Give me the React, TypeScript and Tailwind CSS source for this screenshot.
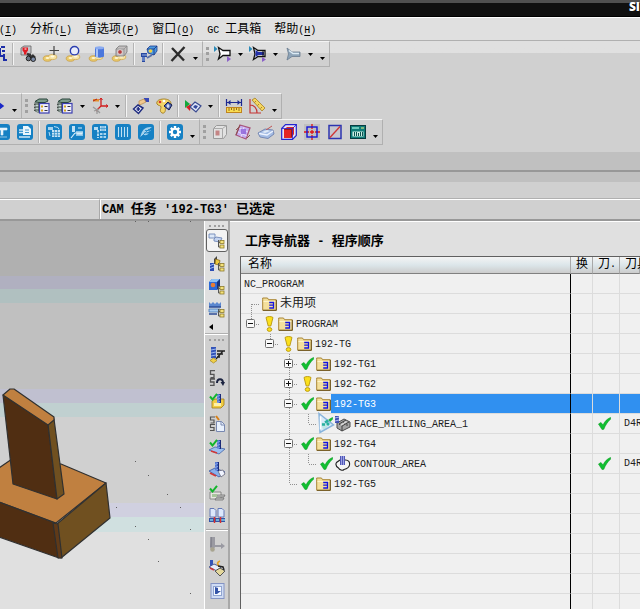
import type { ReactNode } from 'react';

const uiFont = "font-['Liberation_Mono','Noto_Sans_CJK_SC',monospace]";

/* ---------- text ---------- */

interface MixedTextProps {
  text: string;
  bold?: boolean;
}

// Latin runs are set one step smaller so that they take half a CJK cell each
function MixedText({ text, bold = false }: MixedTextProps) {
  const runs = text.split(/([\u4e00-\u9fff]+)/).filter(Boolean);
  return (
    <>
      {runs.map((run, i) => {
        const cjk = /[\u4e00-\u9fff]/.test(run);
        if (bold) {
          return (
            <span key={i} className={cjk ? 'text-[13px] font-bold' : 'text-[12px] font-bold'}>
              {run}
            </span>
          );
        }
        return (
          <span key={i} className={cjk ? 'text-[12px]' : 'text-[10px]'}>
            {run}
          </span>
        );
      })}
    </>
  );
}

/* ---------- icons ---------- */

const gold = (
  <g>
    <ellipse cx="4.5" cy="12.5" rx="4.3" ry="2.8" fill="#e9c96a" stroke="#c79a3c" strokeWidth=".7" />
    <ellipse cx="9.5" cy="11" rx="4.3" ry="2.6" fill="#f6e2a0" stroke="#cfa54a" strokeWidth=".7" />
    <ellipse cx="4.5" cy="12" rx="2" ry="1.1" fill="#fff6d0" />
    <ellipse cx="9.5" cy="10.6" rx="2" ry="1" fill="#fffae0" />
  </g>
);

const treeTag = (
  <g>
    <path d="M9.5 7v7h2M9.5 9.5h2" stroke="#555" fill="none" />
    <rect x="11" y="7.5" width="4" height="3" fill="#f5e27a" stroke="#8d7a2c" strokeWidth=".8" />
    <rect x="11" y="12" width="4" height="3" fill="#f5e27a" stroke="#8d7a2c" strokeWidth=".8" />
  </g>
);

const drill = (
  <g>
    <rect x="6" y="0" width="4" height="9" fill="#3454b8" />
    <path d="M7 0v9M6 2.5l4-1.5M6 5.5l4-1.5M6 8.5l4-1.5" stroke="#8fb0f0" strokeWidth=".8" />
    <path d="M9.5 0v9" stroke="#1b2a78" />
  </g>
);

const greenTick = <path d="M1 3.5l2.5 3L8 .8" fill="none" stroke="#12b52c" strokeWidth="2" />;

const layers = (
  <g>
    <path d="M1 3.500l4-2.500h8l1 2-3 1.500H4z" fill="#7c9c8c" stroke="#28433a" strokeWidth="1" />
    <path d="M1 4v9l3.500 1.500V5z" fill="#c6d8d0" stroke="#44564e" strokeWidth=".7" />
    <path d="M0 6.500l2-.5h3M0 9.500l2-.5h3M0 12.500l2-.5h3" stroke="#38423e" fill="none" />
    <rect x="5.5" y="5.5" width="9.500" height="9.500" fill="#f0f0fc" stroke="#3b3fb0" strokeWidth="1.200" />
    <path d="M7 8.500h2M7 12.500h2" stroke="#d4a81c" strokeWidth="2" />
    <path d="M10.500 8.500h3M10.500 12.500h3" stroke="#334" strokeWidth="1.200" />
  </g>
);

const tile = <rect x="0" y="0" width="16" height="16" rx="3" fill="#1681c4" />;

const icons: Record<string, ReactNode> = {
  edge: <path d="M9 2v8h4M11 5h3M13 8v6h3M10 1h4" stroke="#1c2da8" strokeWidth="2" fill="none" />,
  find: (
    <g>
      <path d="M1 2l3-2h7v7l-3 2H1z" fill="#c4c4c8" stroke="#666" strokeWidth=".8" />
      <path d="M2.500 1.500H8v3L6.500 6.500v2H4v-2L2.500 4.500z" fill="#e01c24" />
      <path d="M4.500 3h2" stroke="#fff" />
      <path d="M7 8l3 1 2 4M12 9l3 3" stroke="#333" strokeWidth="2.500" />
      <circle cx="8.500" cy="12.500" r="2.300" fill="#6a7484" stroke="#222" />
      <circle cx="13.200" cy="13.200" r="2.300" fill="#7c8ca8" stroke="#222" />
    </g>
  ),
  point: (
    <g>
      {gold}
      <path d="M11 0v9M6.500 4.500H16" stroke="#444" strokeWidth="1.200" />
    </g>
  ),
  circle: (
    <g>
      {gold}
      <circle cx="8.500" cy="4.700" r="4.200" fill="#e8ecfa" stroke="#2c3fb0" strokeWidth="1.400" />
    </g>
  ),
  cylinder: (
    <g>
      {gold}
      <path d="M6 1.500v9c2 1.500 7 1.500 9 0v-9z" fill="#4c78dc" />
      <path d="M7 2v9h2V2z" fill="#a8c4f8" />
      <ellipse cx="10.500" cy="1.700" rx="4.500" ry="1.500" fill="#8cacf0" />
    </g>
  ),
  hole: (
    <g>
      {gold}
      <path d="M4 3l3-3h8v6l-3 4H4z" fill="#c4c0c0" stroke="#777" strokeWidth=".8" />
      <path d="M4 3h8v7M12 3l3-3" fill="none" stroke="#888" strokeWidth=".7" />
      <ellipse cx="8" cy="6" rx="2.300" ry="2.300" fill="#b43c3c" stroke="#eee" strokeWidth=".7" />
    </g>
  ),
  machine: (
    <g>
      <path d="M0 7h6v4H4v5H1v-5H0z" fill="#2848a0" />
      <path d="M1 9h5M1 12h3M1 14h3" stroke="#98b4e8" />
      <path d="M6 3l3-3h7v5l-3 4-6-2z" fill="#4c9ae0" stroke="#1f3c90" strokeWidth=".8" />
      <path d="M6 3h7l3-3M13 3v6" stroke="#16307c" strokeWidth=".8" fill="none" />
      <circle cx="9.500" cy="5" r="1.800" fill="#f2d040" />
      <path d="M6 12l5-3" stroke="#5a70a8" strokeWidth="2" />
    </g>
  ),
  cross: <path d="M2 2l12 12.500M14.500 1L1.500 15" stroke="#2c2c2c" strokeWidth="2.400" />,
  funnelOpen: (
    <g>
      <path d="M-1 0l3.500 3L-1 6z" fill="#2c8ab8" />
      <path d="M3.500 1.500l4.500 3h7v5H8l-4.500 3.500L5 8z" fill="#fff" stroke="#111" strokeWidth="1.300" />
      <path d="M12 10l4 3-4 3z" fill="#8c62c8" />
    </g>
  ),
  funnelFull: (
    <g>
      <path d="M-1 0l3.500 3L-1 6z" fill="#2c8ab8" />
      <path d="M3.500 1.500l4.500 3h7v6H8l-4.500 3L5 8z" fill="#fff" stroke="#111" strokeWidth="1.300" />
      <path d="M5.500 4l3 2H14v3H8.500l-3 2z" fill="#2430a8" />
      <path d="M13 5v5" stroke="#111" />
      <path d="M12 11l4 2.500-4 2.500z" fill="#8c62c8" />
    </g>
  ),
  funnelGray: (
    <g>
      <path d="M2 2l5 4h8v4.500H7L2 14l1.500-6z" fill="#8ea4b8" stroke="#6a7c90" strokeWidth=".8" />
      <path d="M4 4.500l4 3h6" stroke="#dceaf4" strokeWidth="1.500" fill="none" />
    </g>
  ),
  arrowBlue: <path d="M4 8h8M10 5l4 3-4 3z" stroke="#1a28c8" strokeWidth="1.500" fill="#1a28c8" />,
  layers,
  axes: (
    <g>
      <path d="M9 0v8h7M9 8l-5 5" stroke="#d01c1c" strokeWidth="1.300" fill="none" />
      <path d="M7.500 2L9 0l1.500 2M14 6.500L16 8l-2 1.500" stroke="#d01c1c" fill="none" />
      <rect x="1" y="1" width="6" height="2.500" fill="#e4902c" />
      <path d="M1 3l4-2" stroke="#b02020" />
      <path d="M1 9l4 3 3 3M5 12v4M2 13l5-2" stroke="#999" strokeWidth="1.300" fill="none" />
    </g>
  ),
  handCube: (
    <g>
      <rect x="11" y="0" width="5" height="4" fill="#3848b8" />
      <path d="M6 3l5-2 2 3-4 2-3 1z" fill="#f0c890" stroke="#b88848" strokeWidth=".7" />
      <path d="M.5 11l4.500-4 5 3-4.500 5.500z" fill="#e8ecf8" stroke="#202c80" strokeWidth="1.500" />
      <path d="M3.500 11h3.500M5.200 9v4" stroke="#202c80" strokeWidth="1.500" />
    </g>
  ),
  palette: (
    <g>
      <path d="M8 1C3 1 0 3 1 6c1 2 4 1 4 3s-2 4 1 6c3 1 4-3 3-5 4 0 6-1 6-4 0-4-4-5-7-5z" fill="#f2d468" stroke="#a8842c" />
      <circle cx="4" cy="4" r="1.300" fill="#d83030" />
      <circle cx="8" cy="3" r="1.300" fill="#fff" />
      <path d="M8 8l4-4 4 3-3 5z" fill="#5068b0" stroke="#141c50" />
      <path d="M10.500 8h3M12 6v4" stroke="#fff" />
    </g>
  ),
  greenRed: (
    <g>
      <path d="M0 2l5 4-5 4z" fill="#14a83c" />
      <path d="M1 9l5-3-1 7z" fill="#d82020" />
      <path d="M5 9l5-5 6 4-5 6z" fill="#dfe6f8" stroke="#3c4c90" strokeWidth="1.200" />
      <path d="M8 9l2-2 3 1-2 3z" fill="#34489c" />
    </g>
  ),
  ruler: (
    <g>
      <path d="M.5 1v7M15.500 1v7M1 4.500h14" stroke="#1c2890" strokeWidth="1.200" />
      <path d="M4.500 2L1.500 4.500l3 2.500zM11.500 2l3 2.500-3 2.500z" fill="#1c2890" />
      <rect x=".5" y="9.500" width="15" height="5" fill="#f8dc50" stroke="#c08420" />
      <path d="M3 10v3M5.500 10v2M8 10v3M10.500 10v2M13 10v3" stroke="#7c4c18" strokeWidth=".8" />
    </g>
  ),
  angle: (
    <g>
      <path d="M1 1v14h11M1 7c4 0 7 3 7 8" stroke="#c43434" fill="none" strokeWidth="1.200" />
      <path d="M3 2l3-2 10 10-3 3z" fill="#f4d660" stroke="#a88024" strokeWidth=".8" />
      <path d="M7 3l-1.500 1.500M10 6L8.500 7.500M13 9l-1.500 1.500" stroke="#886418" strokeWidth=".7" />
    </g>
  ),
  tileText: (
    <g>
      {tile}
      <path d="M2 4h11v2H9v5H7V6H2zM2 13h11" fill="#e6f4fc" stroke="#e6f4fc" strokeWidth=".6" />
    </g>
  ),
  tilePage: (
    <g>
      {tile}
      <path d="M6 2h5l3 3v6H6z" fill="#eaf6fc" />
      <path d="M2 6h4M2 8.500h4M2 13h11" stroke="#cfe8f6" strokeWidth="1.300" />
      <path d="M8 6h4M8 8.500h4" stroke="#1681c4" strokeWidth=".8" />
    </g>
  ),
  tileGrid: (
    <g>
      {tile}
      <path d="M2 3h5v3H2z" fill="#a8d4ee" />
      <path d="M6 6h8v7H6z" fill="#c4e2f4" />
      <path d="M6 8.500h8M6 11h8M8.500 6v7M11.500 6v7" stroke="#3a94cc" strokeWidth=".8" />
      <path d="M8 2.500l4 1 1 2M3 8l1 4" stroke="#b8dcf2" fill="none" />
    </g>
  ),
  tileAxis: (
    <g>
      {tile}
      <path d="M3 2h3v6H3z" fill="#c4e2f4" />
      <path d="M7 7h7v5H7z" fill="#8cc4e6" />
      <path d="M6 9l-4 5M6 9h8M9 4h4M8 10h5" stroke="#d8eefa" strokeWidth="1.200" />
    </g>
  ),
  tileTree: (
    <g>
      {tile}
      <path d="M2 3h4v3H2zM8 2h6v5H8z" fill="#b8dcf2" />
      <path d="M10 2v5M12 2v5M8 4.500h6" stroke="#3a94cc" strokeWidth=".7" />
      <path d="M6 6v8M8 10h6M8 13h6" stroke="#d8eefa" strokeWidth="1.600" strokeDasharray="2.500 1" />
    </g>
  ),
  tileBars: (
    <g>
      {tile}
      <path d="M3.500 3v10M6.500 3v10M9.500 3v10M12.500 3v10" stroke="#bfe0f4" strokeWidth="1.100" />
    </g>
  ),
  tileFan: (
    <g>
      {tile}
      <path d="M2 13c1-2 1-3 2-5 2-4 5-5 10-5-2 1-2 2-4 3h3c-2 2-4 2-5 3h3c-2 3-4 2-6 2z" fill="#a4d2ee" />
      <path d="M3 13l8-8M6 9h5M7 6.500h5" stroke="#1681c4" strokeWidth=".8" />
    </g>
  ),
  tileGear: (
    <g>
      {tile}
      <path d="M8 2v12M2 8h12M3.800 3.800l8.400 8.400M12.200 3.800l-8.400 8.400" stroke="#fff" strokeWidth="2.400" />
      <circle cx="8" cy="8" r="4.300" fill="#fff" />
      <circle cx="8" cy="8" r="2.200" fill="#1681c4" />
    </g>
  ),
  boxFace: (
    <g>
      <path d="M1.500 4.500l3-3h10v9l-3 4h-10z" fill="#e2e2e2" stroke="#999" />
      <path d="M1.500 4.500h9v10M10.500 4.500l4-3" fill="none" stroke="#aaa" />
      <rect x="3.500" y="6.500" width="4" height="5" fill="#c48484" />
    </g>
  ),
  meshPurple: (
    <g>
      <path d="M5 1l10 3-4 11L1 11z" fill="#c4aef0" stroke="#a8547c" strokeWidth="1.300" />
      <path d="M4 4l9 4M3 8l9 4M9 3L6 13" stroke="#efe6ff" strokeWidth=".8" />
      <path d="M5 1L1 11M1 6l3-3M12 14l3-3" stroke="#8c5050" />
      <rect x="6" y="5" width="5" height="5" fill="#8c62d8" opacity=".8" />
    </g>
  ),
  slabs: (
    <g>
      <path d="M0 9l7-4 8 1 1 4-6 4.500-8-1.500z" fill="#a4bce4" stroke="#6478a8" strokeWidth=".8" />
      <path d="M1 9.500l8 1.500 6-4" fill="none" stroke="#eef4ff" strokeWidth="1.300" />
      <path d="M8 6l6-4" stroke="#c05454" />
      <path d="M4 8l5-2 3 1-5 2z" fill="#dfeaf8" />
    </g>
  ),
  redCube: (
    <g>
      <path d="M.7 4.500L4.500.7h10.800v10.800l-3.800 3.800H.7z" fill="#e8e4f4" stroke="#2424d0" strokeWidth="1.200" />
      <path d="M3 5.500l3-2.500h7v7l-2.500 4H3z" fill="#e42424" />
      <path d="M3 5.500h7.500v8M10.500 5.500L13 3" stroke="#901010" strokeWidth=".8" fill="none" />
      <path d="M.7 4.500h10.800v10.800M11.500 4.500L15.300.7" fill="none" stroke="#2424d0" strokeWidth=".8" />
    </g>
  ),
  target: (
    <g>
      <rect width="16" height="16" fill="#c0c0c0" />
      <path d="M8 0v5M8 6v4M8 11v5M0 8h5M6 8h4M11 8h5" stroke="#e01414" strokeWidth="1.300" />
      <rect x="3" y="3" width="10" height="10" fill="none" stroke="#1414d8" strokeWidth="1.400" />
    </g>
  ),
  slash: (
    <g>
      <rect x="2" y="1.500" width="12" height="13" fill="#c6c6ce" stroke="#2c34b0" strokeWidth="1.500" />
      <path d="M3 13.500L13 2.500" stroke="#d03434" strokeWidth="1.300" />
    </g>
  ),
  panel: (
    <g>
      <rect x=".5" y="1.500" width="15" height="13" fill="#0f7c78" stroke="#083c40" />
      <path d="M2 4h7" stroke="#8ee0d0" strokeWidth="1.500" />
      <path d="M2.500 7.500h11v5h-11z" fill="#cfeee4" />
      <path d="M4.500 8v4M6.500 8v4M8.500 9v3M10.500 8v4M12.500 8v4" stroke="#0c5450" />
      <path d="M11 4h3" stroke="#f0f080" />
    </g>
  ),
  viewOrder: (
    <g>
      <path d="M0 1h6v4H0z" fill="#dce8f8" stroke="#7088b8" strokeWidth=".9" />
      <path d="M5 6l2-2 6 1-2 4-6-1z" fill="#c4d4f0" stroke="#7088b8" strokeWidth=".9" />
      {treeTag}
    </g>
  ),
  viewTool: (
    <g>
      <path d="M1 7h4v8H1z" fill="#2c4cb4" />
      <path d="M1 9.500l4-1.500M1 12.500l4-1.500" stroke="#9cbcf4" />
      <path d="M5 3l3-3v8H5z" fill="#444" />
      <path d="M6.500 3l4.500 1.500-1 4.500-4-1z" fill="#ecc83c" stroke="#86681c" strokeWidth=".8" />
      {treeTag}
    </g>
  ),
  viewGeom: (
    <g>
      <path d="M0 3l3-3h8v7l-3 4H0z" fill="#2c68d8" />
      <path d="M0 3l3-3h8L8 3z" fill="#8cc0f4" />
      <circle cx="4" cy="6" r="2.300" fill="#e87c34" />
      <path d="M8 3l3-3v7l-3 4z" fill="#1a347c" />
      {treeTag}
    </g>
  ),
  viewMethod: (
    <g>
      <path d="M0 0v5h12V0l-2 2-2-2-2 2-2-2-2 2z" fill="#5c88d0" />
      <path d="M0 5h12M0 12h8" stroke="#2c4c98" strokeWidth="1.300" />
      <path d="M0 7h11v3H0z" fill="#a8ccf0" stroke="#4878b8" strokeWidth=".8" />
      {treeTag}
    </g>
  ),
  createTool: (
    <g>
      <rect x="2" y="0" width="5" height="11" fill="#3454b8" />
      <path d="M2 3l5-1M2 6l5-1M2 9l5-1" stroke="#9cb8f0" />
      <path d="M8 4h8M8 7h6M8 10h3M7 12l7-8" stroke="#222" strokeWidth="1.300" />
      <path d="M1 13.500l3.500-2.500 3.500 2.500-3.500 2.500z" fill="#f0d048" stroke="#a4841c" strokeWidth=".7" />
    </g>
  ),
  path: (
    <g>
      <path d="M6 .7H1.500v3.600H5v3.400H1.500M6 9H1.500v3H5v3.300H1" fill="none" stroke="#555" strokeWidth="1.300" />
      <path d="M8 13c0-5 6-5 6 0" fill="none" stroke="#1c2440" strokeWidth="2" />
      <path d="M11.500 12h4.500l-2 4z" fill="#1c2440" />
    </g>
  ),
  verifyBox: (
    <g>
      <path d="M3 8l3-2h9v6l-3 3H3z" fill="#f0cc44" stroke="#a07c1c" strokeWidth=".8" />
      <path d="M5 10h7v3H5z" fill="#fdf0a8" />
      <g transform="translate(2 1)">{drill}</g>
      {greenTick}
    </g>
  ),
  pathDoc: (
    <g>
      <path d="M6 1H1.500v3H5v3H1.500M6 8.500H1.500v3H5v3H1" fill="none" stroke="#555" strokeWidth="1.200" />
      <path d="M7 0l3 4" stroke="#d88018" strokeWidth="2" />
      <path d="M7.500 5.500h5l3 3v7h-8z" fill="#e8f0fc" stroke="#7888b0" />
      <path d="M12 5.500V9h3.500" fill="none" stroke="#7888b0" />
    </g>
  ),
  verifyPlane: (
    <g>
      <path d="M0 11l6-3 10 2-6 5z" fill="#9cc0f0" stroke="#4464a8" strokeWidth=".8" />
      <path d="M2 12l6 2" stroke="#d03838" strokeWidth="1.800" />
      <g transform="translate(2 1)">{drill}</g>
      {greenTick}
    </g>
  ),
  simulate: (
    <g>
      <path d="M0 9l6-3 10 4-6 5z" fill="#88b0ec" stroke="#3c58a0" strokeWidth=".8" />
      <path d="M1 11l6 3" stroke="#d03838" strokeWidth="1.800" />
      <path d="M9 9l5-1 2 4-4 3z" fill="#f0f4ff" stroke="#667" strokeWidth=".8" />
      {drill}
    </g>
  ),
  postTick: (
    <g>
      <path d="M1 7h11v7H1z" fill="#e6e6e0" stroke="#808080" strokeWidth=".9" />
      <path d="M8 10h8l-1 2H7zM7 13h8l-1 2H6z" fill="#c4c4c4" stroke="#666" strokeWidth=".7" />
      <path d="M3 9h5v3H3z" fill="#a8c49c" />
      {greenTick}
    </g>
  ),
  docs: (
    <g>
      <path d="M1 .5h4l2 2V9H1zM9 .5h4l2 2V9H9z" fill="#dce8fc" stroke="#6478b4" />
      <rect x="0" y="10" width="16" height="4" fill="#3454a8" />
      <path d="M1 12h3M7 12h3M12 12h4" stroke="#80d0e8" strokeWidth="1.500" />
      <path d="M5.500 9v6M11.500 9v6" stroke="#d83030" strokeWidth="1.500" />
    </g>
  ),
  toolGray: (
    <g>
      <path d="M2 0h4v8h6V6l4 3-4 3v-2H6l-2 4-3-3z" fill="#9a9aa2" />
      <path d="M2 0v10" stroke="#777784" strokeWidth="1.200" />
      <circle cx="3.500" cy="12.500" r="2.300" fill="#a8a490" />
    </g>
  ),
  toolCopy: (
    <g>
      <rect x="1" y="0" width="3" height="6" fill="#3454b8" />
      <path d="M0 7l5-3 7 3-4 4z" fill="#e8ecf8" stroke="#4c5c94" />
      <path d="M1 8l4 2" stroke="#d03838" strokeWidth="1.500" />
      <path d="M11 1c-3 1-3 3-1 5" stroke="#e8a428" strokeWidth="1.800" fill="none" />
      <path d="M6 11l5-3 5 3-5 5z" fill="#e4d89c" stroke="#555" />
      <path d="M9 6l5 1 1 3" stroke="#222" strokeWidth="1.500" fill="none" />
    </g>
  ),
  toolDoc: (
    <g>
      <rect x="2" y=".5" width="13" height="15" fill="#cfdcf4" stroke="#8494c4" />
      <rect x="4.500" y="3.500" width="8" height="9" fill="#f4f8ff" stroke="#90a4d0" />
      <path d="M6 4v7h2l4-3-3 0V5z" fill="#3454a8" />
    </g>
  ),
  drillOnly: <g transform="translate(-5 3)">{drill}</g>,
};

function Glyph({ name }: { name: string }) {
  return (
    <svg viewBox="0 0 16 16" className="h-4 w-4 shrink-0 overflow-visible" aria-hidden="true">
      {icons[name]}
    </svg>
  );
}

function TickIcon() {
  return (
    <svg viewBox="0 0 13 13" className="h-[13px] w-[13px] shrink-0" aria-hidden="true">
      <path d="M.5 7L3 5.500l2 2.500c2-4 4-6 7.500-7.500l.2 1.500C9.500 5 7.500 8 5.800 12.300L4 12.500z" fill="#10c030" stroke="#0a9c24" strokeWidth=".6" />
    </svg>
  );
}

function WarnIcon() {
  return (
    <svg viewBox="0 0 9 16" className="h-4 w-[9px] shrink-0" aria-hidden="true">
      <path d="M1 1.500C2.500.2 6.500.2 8 1.500L5.800 10H3.200z" fill="#fbe01c" stroke="#b8960c" strokeWidth=".9" />
      <ellipse cx="4.500" cy="13.500" rx="2.300" ry="1.900" fill="#fbe01c" stroke="#b8960c" strokeWidth=".9" />
    </svg>
  );
}

function FolderIcon() {
  return (
    <svg viewBox="0 0 15 14" className="h-[14px] w-[15px] shrink-0" aria-hidden="true">
      <path d="M.7 2.200V1h4.800l1 1.700h7.800v10.600H.7z" fill="#f4e09c" stroke="#a88434" />
      <path d="M1.500 4.500h12" stroke="#fdf4c8" />
      <path d="M14.300 3v10.300H1" stroke="#6c5420" fill="none" />
      <path d="M7.200 5.500h4.300v5.500H7.200M7.200 8.200h4.300" fill="none" stroke="#1414e0" strokeWidth="1.300" />
    </svg>
  );
}

function FaceMillIcon() {
  return (
    <svg viewBox="0 0 16 16" className="h-4 w-4 shrink-0" aria-hidden="true">
      <path d="M2 7l7-4 6 3v5l-8 4-5-3z" fill="#a4a4a4" stroke="#4c4c4c" />
      <path d="M4 8l7-4M7 10l7-4M7 10v5M4 8l3 2M10 8l-2-2M12 10v-2" stroke="#404040" />
      <path d="M5 9l6-4 1 1-6 4z" fill="#dcdcdc" />
      <path d="M0 0h4v7H0z" fill="#4050b4" />
      <path d="M0 2l4-1M0 5l4-1" stroke="#b0bcf0" />
    </svg>
  );
}

function ContourIcon() {
  return (
    <svg viewBox="0 0 16 16" className="h-4 w-4 shrink-0" aria-hidden="true">
      <path d="M5 4L1.500 6.500C0 9 2 11 3.500 12c1 2 4 3 5.500 1.500C11 13 14 12 14.500 9c.5-3-1-5-4-5z" fill="#f4f4f4" stroke="#222" strokeWidth="1.100" />
      <rect x="5" y="0" width="5" height="9" fill="#5058b8" />
      <path d="M6.500 0v9M8.500 0v9" stroke="#b0b4ec" strokeWidth=".8" />
    </svg>
  );
}

function Pointer() {
  return (
    <svg viewBox="0 0 18 22" className="pointer-events-none absolute -top-[2px] left-[76px] h-[22px] w-[18px]" aria-hidden="true">
      <path d="M2 1.500L16.500 13 3 20.500z" fill="#d4eafa" fillOpacity=".9" stroke="#88b4dc" strokeWidth="1.500" />
      <path d="M3.500 4.500v13" stroke="#fff" strokeWidth="1.500" />
      <path d="M5 12.500h3M10 11l2 2M8 10.500l3-2" stroke="#28b0a0" strokeWidth="2.600" fill="none" />
    </svg>
  );
}

/* ---------- toolbars ---------- */

function Caret({ low = false }: { low?: boolean }) {
  return (
    <button
      type="button"
      aria-label="More"
      className={low ? 'flex w-[13px] items-center justify-center pt-2' : 'flex w-3 items-center justify-center'}
    >
      <svg viewBox="0 0 5 3" className="h-[3px] w-[5px]" aria-hidden="true">
        <path d="M0 0h5L2.500 3z" fill="#000" />
      </svg>
    </button>
  );
}

function Grip() {
  return <div className="my-[5px] ml-[3px] mr-[2px] w-[3px] border-l-3 border-dotted border-[#a0a0a0]" />;
}

interface ToolGroupProps {
  items: string[];
  className?: string;
}

// "|" divider, "v" drop-down, "V" overflow, ":" grip
function ToolGroup({ items, className = '' }: ToolGroupProps) {
  return (
    <div className={`flex h-[26px] shrink-0 border-b border-r border-t border-b-[#b0b0b0] border-r-[#b0b0b0] border-t-[#f4f4f4] ${className}`}>
      {items.map((item, i) => {
        if (item === '|') return <div key={i} className="my-px ml-[2px] mr-[2px] w-[2px] border-l border-r border-l-[#b4b4b4] border-r-[#f4f4f4]" />;
        if (item === 'v') return <Caret key={i} />;
        if (item === 'V') return <Caret key={i} low />;
        if (item === ':') return <Grip key={i} />;
        return (
          <button key={i} type="button" aria-label={item} className="flex w-[23px] shrink-0 items-center justify-center">
            <Glyph name={item} />
          </button>
        );
      })}
    </div>
  );
}

const menus = [
  { label: '', mnemonic: 'I' },
  { label: '分析', mnemonic: 'L' },
  { label: '首选项', mnemonic: 'P' },
  { label: '窗口', mnemonic: 'O' },
  { label: 'GC 工具箱', mnemonic: '' },
  { label: '帮助', mnemonic: 'H' },
];

function MenuBar() {
  return (
    <nav className="-ml-px flex h-6 shrink-0 items-center gap-[13px] border-b border-t border-b-[#b0b0b0] border-t-white bg-[#e0e0e0] pt-px">
      {menus.map((menu) => (
        <button key={menu.label} type="button" className="whitespace-pre leading-5">
          <MixedText text={menu.label} />
          {menu.mnemonic && (
            <span className="text-[10px]">
              (<span className="underline underline-offset-2">{menu.mnemonic}</span>)
            </span>
          )}
        </button>
      ))}
    </nav>
  );
}

/* ---------- graphics window ---------- */

const specks = [
  [135, 244], [148, 258], [167, 277], [180, 290], [116, 290], [135, 309], [148, 322], [190, 312],
  [158, 344], [190, 376], [135, 4], [148, 4], [190, 4],
];

function GraphicsWindow() {
  return (
    <div className="flex w-[204px] shrink-0 overflow-hidden bg-[#e0e0e0]">
      <svg width="204" height="388" className="shrink-0" role="img" aria-label="Part">
        <rect width="204" height="55" fill="#b0b0b0" />
        <rect y="55" width="204" height="13" fill="#b0b0c0" />
        <rect y="68" width="204" height="14" fill="#b0c0c0" />
        <rect y="82" width="204" height="86" fill="#c0c0c0" />
        <rect y="168" width="204" height="14" fill="#c0c0d0" />
        <rect y="182" width="204" height="14" fill="#c0d0d0" />
        <rect y="196" width="204" height="86" fill="#d0d0d0" />
        <rect y="282" width="204" height="14" fill="#d0d0e0" />
        <rect y="296" width="204" height="15" fill="#d0e0e0" />
        <g stroke="#303030" strokeWidth="1.200" strokeLinejoin="round">
          <path d="M-1 247L12 238 61 243 106 262 56 302-1 281z" fill="#c08040" />
          <path d="M-1 281L55 302l4 35-60-21z" fill="#502e12" />
          <path d="M106 262l4 35-49 40-4-34z" fill="#705020" />
          <path d="M53 302l5 1 4 34-4 0z" fill="#603a18" />
          <path d="M3 174L48 203l9 75-44-15z" fill="#502e12" />
          <path d="M48 203l6-5 10 75-7 5z" fill="#705020" />
          <path d="M3 174l7-6 4 0 40 28v3l-6 5z" fill="#c08040" />
        </g>
        {specks.map(([x, y]) => (
          <rect key={`${x}-${y}`} x={x} y={y - 4} width="1" height="1" fill="#606060" />
        ))}
      </svg>
    </div>
  );
}

/* ---------- side tool strip ---------- */

function SideButton({ name, active = false }: { name: string; active?: boolean }) {
  return (
    <button
      type="button"
      aria-label={name}
      className={
        active
          ? 'flex h-[23px] w-[22px] shrink-0 items-center justify-center rounded-[3px] border border-[#606060] bg-[#f4f4f4]'
          : 'flex h-[23px] w-[22px] shrink-0 items-center justify-center'
      }
    >
      <Glyph name={name} />
    </button>
  );
}

function SideGrip() {
  return <div className="mb-[2px] mt-1 w-[15px] shrink-0 border-t-2 border-dotted border-[#a0a0a0]" />;
}

function SideStrip() {
  return (
    <aside className="flex w-[26px] shrink-0 flex-col overflow-hidden border-l border-r-2 border-l-white border-r-[#a8a8a8]">
      <div className="flex shrink-0 flex-col items-center border-b border-[#b0b0b0] bg-[#e0e0e0]">
        <SideGrip />
        <SideButton name="viewOrder" active />
        <SideButton name="viewTool" />
        <SideButton name="viewGeom" />
        <SideButton name="viewMethod" />
        <button type="button" aria-label="Collapse" className="flex h-3 w-full items-center pl-1">
          <svg viewBox="0 0 4 6" className="h-[6px] w-1" aria-hidden="true">
            <path d="M4 0v6L0 3z" />
          </svg>
        </button>
      </div>
      <div className="flex flex-col items-center border-t border-white bg-[#d0d0d0]">
        <SideGrip />
        <SideButton name="createTool" />
        <SideButton name="path" />
        <SideButton name="verifyBox" />
        <SideButton name="pathDoc" />
        <SideButton name="verifyPlane" />
        <SideButton name="simulate" />
        <SideButton name="postTick" />
        <SideButton name="docs" />
        <div className="my-[2px] h-[2px] w-[22px] shrink-0 border-b border-t border-b-white border-t-[#a8a8a8]" />
        <SideButton name="toolGray" />
        <SideButton name="toolCopy" />
        <SideButton name="toolDoc" />
        <SideButton name="drillOnly" />
      </div>
    </aside>
  );
}

/* ---------- operation navigator ---------- */

type Guide = 'none' | 'line' | 'start' | 'end' | 'minusLast' | 'minus' | 'plus';

function GuideCell({ kind }: { kind: Guide }) {
  const box = kind === 'minus' || kind === 'minusLast' || kind === 'plus';
  return (
    <svg viewBox="0 0 19 20" className="h-5 w-[19px] shrink-0" aria-hidden="true">
      <g stroke="#909090" strokeDasharray="1 1" fill="none">
        {kind !== 'none' && kind !== 'start' && <path d="M10.500 0v10" />}
        {(kind === 'line' || kind === 'start' || kind === 'minus' || kind === 'plus') && <path d="M10.500 10v10" />}
        {kind !== 'none' && kind !== 'line' && <path d="M11 10.500h8" />}
      </g>
      {box && (
        <g>
          <rect x="5.500" y="5.500" width="8" height="8" rx="1" fill="#fafafa" stroke="#707070" />
          <path d="M7 9.500h5" stroke="#111" />
          {kind === 'plus' && <path d="M9.500 7v5" stroke="#111" />}
        </g>
      )}
    </svg>
  );
}

interface TreeRow {
  name: string;
  guides: Guide[];
  status?: 'ok' | 'warn';
  icon?: 'folder' | 'face' | 'contour';
  selected?: boolean;
  pointer?: boolean;
  tool?: string;
}

const rows: TreeRow[] = [
  { name: 'NC_PROGRAM', guides: [] },
  { name: '未用项', guides: ['start'], icon: 'folder' },
  { name: 'PROGRAM', guides: ['minusLast'], status: 'warn', icon: 'folder' },
  { name: '192-TG', guides: ['none', 'minusLast'], status: 'warn', icon: 'folder' },
  { name: '192-TG1', guides: ['none', 'none', 'plus'], status: 'ok', icon: 'folder' },
  { name: '192-TG2', guides: ['none', 'none', 'plus'], status: 'warn', icon: 'folder' },
  { name: '192-TG3', guides: ['none', 'none', 'minus'], status: 'ok', icon: 'folder', selected: true },
  { name: 'FACE_MILLING_AREA_1', guides: ['none', 'none', 'line', 'end'], status: 'ok', icon: 'face', pointer: true, tool: 'D4R' },
  { name: '192-TG4', guides: ['none', 'none', 'minus'], status: 'ok', icon: 'folder' },
  { name: 'CONTOUR_AREA', guides: ['none', 'none', 'line', 'end'], status: 'ok', icon: 'contour', tool: 'D4R' },
  { name: '192-TG5', guides: ['none', 'none', 'end'], status: 'ok', icon: 'folder' },
  ...Array.from({ length: 6 }, () => ({ name: '', guides: [] })),
];

function NameCell({ row }: { row: TreeRow }) {
  return (
    <div className="relative flex h-[19px] items-center">
      {row.guides.map((kind, i) => (
        <GuideCell key={i} kind={kind} />
      ))}
      {row.status && (
        <span className="flex w-[18px] shrink-0 justify-center">{row.status === 'ok' ? <TickIcon /> : <WarnIcon />}</span>
      )}
      {row.icon === 'folder' && (
        <span className={row.status ? '' : 'pl-[2px]'}>
          <FolderIcon />
        </span>
      )}
      {row.icon === 'face' && <FaceMillIcon />}
      {row.icon === 'contour' && <ContourIcon />}
      <span
        className={
          row.selected
            ? 'h-full flex-1 whitespace-nowrap bg-[#3090f0] pl-[3px] leading-[19px] text-white'
            : 'h-full flex-1 whitespace-nowrap pl-[3px] leading-[19px]'
        }
      >
        <MixedText text={row.name} />
      </span>
      {row.pointer && <Pointer />}
    </div>
  );
}

const columns = ['换', '刀.', '刀具'];

function TreeTable() {
  const head =
    'h-[17px] border-b border-b-[#808080] border-r border-r-[#a8a8a8] bg-linear-to-b from-[#f4f4f4] via-[#dce6ea] to-[#cccccc] p-0 text-left font-normal';
  return (
    <table className="w-full table-fixed border-separate border-spacing-0 text-[#202020]">
      <colgroup>
        <col />
        <col className="w-[22px]" />
        <col className="w-[27px]" />
        <col className="w-[20px]" />
      </colgroup>
      <thead>
        <tr className="text-black">
          <th className={head}>
            <div className="flex h-4 items-center pl-[7px] leading-4">
              <MixedText text="名称" />
            </div>
          </th>
          {columns.map((label) => (
            <th key={label} className={head}>
              <div className="flex h-4 items-center whitespace-nowrap pl-[5px] leading-4">
                <MixedText text={label} />
              </div>
            </th>
          ))}
        </tr>
      </thead>
      <tbody>
        {rows.map((row, i) => {
          const cell = row.selected
            ? 'h-5 border-b border-r border-[#dcdcdc] bg-[#3090f0] p-0 last:border-r-0'
            : 'h-5 border-b border-r border-[#dcdcdc] p-0 last:border-r-0';
          return (
            <tr key={i}>
              <td className="h-5 border-b border-r border-b-[#dcdcdc] border-r-black p-0">
                <NameCell row={row} />
              </td>
              <td className={cell} />
              <td className={cell}>
                <div className="flex h-[19px] items-center pl-[5px]">{row.tool && <TickIcon />}</div>
              </td>
              <td className={cell}>
                <div className="flex h-[19px] items-center whitespace-nowrap pl-1 leading-4">
                  {row.tool && <MixedText text={row.tool} />}
                </div>
              </td>
            </tr>
          );
        })}
      </tbody>
    </table>
  );
}

function Navigator() {
  return (
    <section className="flex min-w-0 flex-1 flex-col border-t border-white bg-[#e0e0e0]">
      <h1 className="flex h-[34px] shrink-0 items-center whitespace-pre pl-[15px] pt-[6px] leading-5">
        <MixedText text="工序导航器 - 程序顺序" bold />
      </h1>
      <div className="ml-[10px] min-h-0 flex-1 overflow-hidden border-l border-t border-[#606060] bg-[#f0f0f0]">
        <TreeTable />
      </div>
    </section>
  );
}

export default function App() {
  return (
    <div className={`flex h-screen flex-col overflow-hidden bg-[#d0d0d0] text-black ${uiFont}`}>
      <header className="flex h-[17px] shrink-0 items-center justify-end border-b border-t-3 border-b-black border-t-[#505050] bg-[#101010]">
        <span className="-mt-[6px] font-['Open_Sans',sans-serif] text-[12px] font-extrabold leading-3 text-white">SI</span>
      </header>
      <MenuBar />
      <div className="flex h-[52px] shrink-0 bg-linear-to-b from-[#e0e0e0] from-[12px] to-[#d0d0d0] to-[12px]">
        <ToolGroup
          className="-ml-[13px]"
          items={['edge', '|', 'find', 'point', 'circle', 'cylinder', 'hole', '|', 'machine', '|', 'cross', 'V']}
        />
        <ToolGroup items={[':', 'funnelOpen', 'v', 'funnelFull', 'v', 'funnelGray', 'v', 'V']} />
      </div>
      <div className="flex shrink-0">
        <ToolGroup className="-ml-[15px]" items={['arrowBlue', 'V']} />
        <ToolGroup
          items={[':', 'layers', 'layers', 'v', 'axes', 'v', '|', 'handCube', 'palette', '|', 'greenRed', 'v', '|', 'ruler', 'angle', 'V']}
        />
      </div>
      <div className="flex shrink-0 pb-[7px]">
        <ToolGroup
          className="-ml-[10px]"
          items={['tileText', 'tilePage', '|', 'tileGrid', 'tileAxis', 'tileTree', 'tileBars', 'tileFan', '|', 'tileGear', 'V']}
        />
        <ToolGroup items={[':', 'boxFace', 'meshPurple', 'slabs', 'redCube', 'target', 'slash', 'panel', 'V']} />
      </div>
      <div className="h-5 shrink-0 border-b-2 border-[#989898] bg-[#c0c0c0]" />
      <div className="h-[10px] shrink-0 bg-[#c0c0c0]" />
      <div className="h-4 shrink-0" />
      <div className="flex h-[23px] shrink-0 border-b-2 border-t border-b-[#989898] border-t-[#b0b0b0]">
        <div className="w-[100px] border-r border-t border-r-[#a8a8a8] border-t-white" />
        <p className="flex-1 whitespace-pre border-l border-t border-white pl-px leading-[18px]">
          <MixedText text="CAM 任务 '192-TG3' 已选定" bold />
        </p>
      </div>
      <main className="flex min-h-0 flex-1">
        <GraphicsWindow />
        <SideStrip />
        <Navigator />
      </main>
    </div>
  );
}
